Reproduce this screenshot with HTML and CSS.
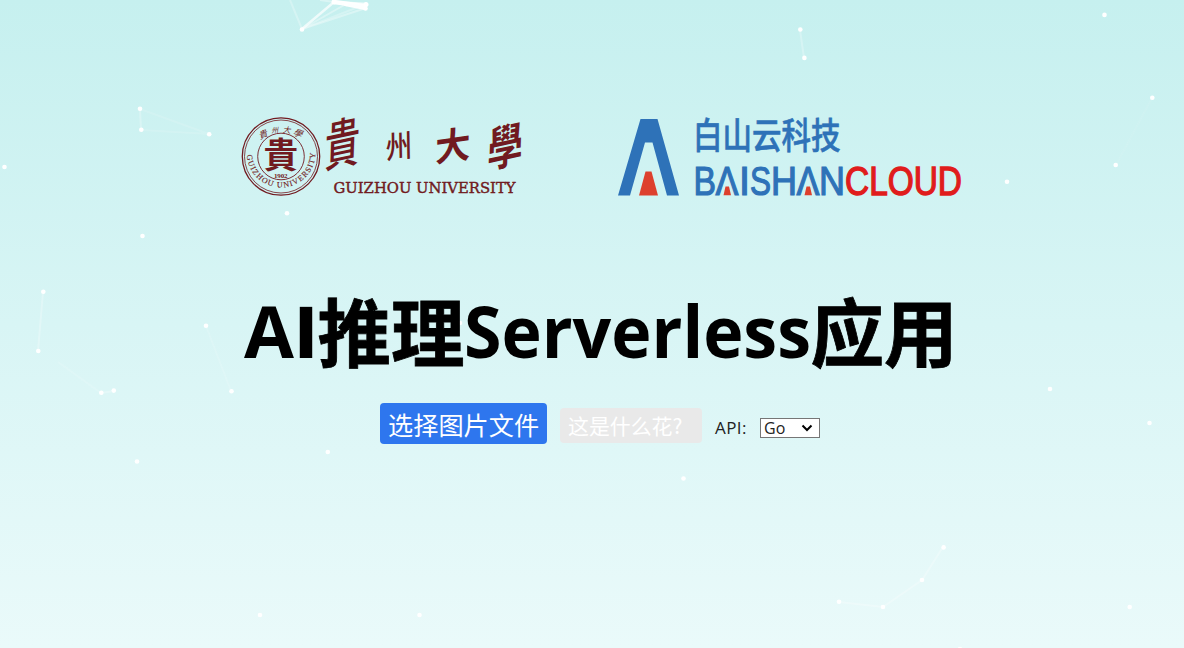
FILE: index.html
```html
<!DOCTYPE html>
<html lang="zh-CN">
<head>
<meta charset="utf-8">
<title>AI推理Serverless应用</title>
<link rel="stylesheet" href="styles.css">
</head>
<body>
<svg class="particles" width="1184" height="648" aria-hidden="true">
  <g class="links">
    <path class="thick" opacity=".95" d="M334 2L367 6.500M346 4L366 8"/>
    <path class="mid" opacity=".7" d="M302 29L334 2L367 4"/>
    <path opacity=".35" d="M302 29L346 4M302 29L366 8M334 2L320 0"/>
    <path opacity=".25" d="M302 29L290 0M302 29L366 4"/>
    <path opacity=".25" d="M140 109L141 130M800 30L804 58M43 292L38 351M101 393L114 391M839 602L883 607L922 580L943 547"/>
    <path opacity=".12" d="M140 109L209 134L141 130M206 326L231 391M58 362L101 393"/>
    <path opacity=".06" d="M1152 98L1116 165"/>
  </g>
  <g class="dots">
    <circle cx="302" cy="29.500" r="2.300"/><circle cx="334" cy="2" r="2.500"/><circle cx="346" cy="4" r="2.300"/><circle cx="366" cy="4.500" r="2.500"/><circle cx="365.500" cy="8.500" r="2.300"/>
    <circle cx="140" cy="108.700" r="2.300"/><circle cx="141.300" cy="129.800" r="2.300"/><circle cx="209.200" cy="134.200" r="2.300"/><circle cx="287" cy="213.300" r="2.300"/><circle cx="142.500" cy="236" r="2.300"/><circle cx="4.500" cy="167" r="2.300"/>
    <circle cx="43.300" cy="291.800" r="2.300"/><circle cx="38.300" cy="351" r="2.300"/><circle cx="101.300" cy="392.800" r="2.300"/><circle cx="113.800" cy="390.600" r="2.300"/><circle cx="206" cy="325.700" r="2.300"/><circle cx="231.500" cy="391.200" r="2.300"/><circle cx="137" cy="461.500" r="2.300"/><circle cx="327.800" cy="452" r="2.300"/>
    <circle cx="800.300" cy="29.500" r="2.300"/><circle cx="804.400" cy="57.900" r="2.300"/><circle cx="1104.500" cy="14.900" r="2.300"/><circle cx="1152.300" cy="97.700" r="2.300"/><circle cx="1115.700" cy="165" r="2.300"/><circle cx="1007" cy="181.800" r="2.300"/>
    <circle cx="1050" cy="389" r="2.300"/><circle cx="1149.500" cy="423" r="2.300"/><circle cx="683.500" cy="478.500" r="2.300"/><circle cx="943.600" cy="547.400" r="2.300"/><circle cx="922" cy="580" r="2.300"/><circle cx="839" cy="601.700" r="2.300"/><circle cx="883" cy="607" r="2.300"/><circle cx="1129.700" cy="607" r="2.300"/><circle cx="260" cy="615" r="2.300"/><circle cx="419.500" cy="615" r="2.300"/><circle cx="460" cy="323" r="2.300"/><circle cx="960" cy="649" r="2.300"/>
  </g>
</svg>
<main class="page">
  <header class="logos">
    <svg class="gzu" width="290" height="90" viewBox="240 110 290 90" role="img" aria-label="貴州大學 Guizhou University">
      <defs>
        <path id="ring-low" d="M246.800 155A34.300 34.300 0 0 0 315.300 155"/>
      </defs>
      <g class="seal">
        <circle cx="281" cy="156.500" r="38.700" stroke-width="1.300"/>
        <circle cx="281" cy="156.500" r="36.500" stroke-width=".8"/>
        <circle cx="281" cy="156.500" r="23.300" stroke-width=".9"/>
      </g>
      <g class="maroon">
        <text class="serif ring" font-size="8" textLength="106" lengthAdjust="spacing"><textPath href="#ring-low" startOffset="0">GUIZHOU UNIVERSITY</textPath></text>
        <g class="cjk mini" font-size="9">
          <text transform="translate(260 139.500) rotate(-24) skewX(-16)">貴</text>
          <text font-size="7" transform="translate(271.500 133) rotate(-4) skewX(-12)">州</text>
          <text font-size="8" transform="translate(282.500 132.500) rotate(5) skewX(-12)">大</text>
          <text transform="translate(292.500 134.500) rotate(20) skewX(-16)">學</text>
        </g>
        <text class="cjk heavy" font-size="33" transform="translate(263.500 167.500) scale(1.050 1.060)">貴</text>
        <text class="serif bold" x="274" y="177.500" font-size="7" textLength="13.500">1902</text>
        <g class="cjk brush">
          <text font-size="50" transform="translate(324 167.500) rotate(-12) skewX(-14) scale(.72 1.060)">貴</text>
          <text font-size="32" transform="translate(386 159) rotate(-6) skewX(-5) scale(.83 .960)">州</text>
          <text class="bolder" font-size="37" transform="translate(435 162) rotate(-8) skewX(-9) scale(.96 1)">大</text>
          <text class="bolder" font-size="43" transform="translate(487 168) rotate(-12) skewX(-14) scale(.84 1.080)">學</text>
        </g>
        <text class="serif name" x="333.500" y="192.700" font-size="14" textLength="182" lengthAdjust="spacingAndGlyphs">GUIZHOU UNIVERSITY</text>
      </g>
    </svg>
    <svg class="baishan" width="350" height="90" viewBox="615 110 350 90" role="img" aria-label="白山云科技 BAISHANCLOUD">
      <path class="blue" d="M640.500 119H657.500L679 195.500H667L652.500 142.500H645L630 195.500H618Z"/>
      <path class="red" d="M645.500 171.500H651.500L658 195.500H639Z"/>
      <text class="blue cjk medium" font-size="36" transform="translate(693 148.700) scale(.82 1)" textLength="180">白山云科技</text>
      <g class="blue latin">
        <text x="693.500" y="195" textLength="22.500" lengthAdjust="spacingAndGlyphs">B</text>
        <text x="715.500" y="195" textLength="23" lengthAdjust="spacingAndGlyphs">Λ</text>
        <text x="739" y="195" textLength="11" lengthAdjust="spacingAndGlyphs">I</text>
        <text x="750" y="195" textLength="21" lengthAdjust="spacingAndGlyphs">S</text>
        <text x="771" y="195" textLength="26" lengthAdjust="spacingAndGlyphs">H</text>
        <text x="796.500" y="195" textLength="23" lengthAdjust="spacingAndGlyphs">Λ</text>
        <text x="819" y="195" textLength="26" lengthAdjust="spacingAndGlyphs">N</text>
      </g>
      <path class="red" d="M725.500 186.500H729L731 195.300H723.500ZM806.500 186.500H810L812 195.300H804.500Z"/>
      <text class="cloud" x="845" y="195" textLength="117" lengthAdjust="spacingAndGlyphs">CLOUD</text>
    </svg>
  </header>
  <h1 class="title">
    <svg width="714" height="90" viewBox="243 290 714 90">
      <text class="t-latin" x="244" y="358" textLength="50" lengthAdjust="spacingAndGlyphs">A</text>
      <text class="t-bar" x="294" y="358" textLength="24" lengthAdjust="spacingAndGlyphs">I</text>
      <text class="t-cjk" x="317.500" y="360.500">推理</text>
      <text class="t-latin" x="464" y="358" textLength="347" lengthAdjust="spacingAndGlyphs">Serverless</text>
      <text class="t-cjk" x="810.500" y="360.500">应用</text>
    </svg>
  </h1>
  <div class="controls">
    <button class="btn choose">选择图片文件</button>
    <button class="btn ask">这是什么花?</button>
    <span class="api">API:</span>
    <div class="select"><span>Go</span>
      <svg width="12" height="8" viewBox="0 0 12 8"><path d="M1.500 1.500L6 6L10.500 1.500"/></svg>
    </div>
  </div>
</main>
</body>
</html>
```
FILE: styles.css
```css
* { box-sizing: border-box; }
body {
  margin: 0;
  height: 648px;
  overflow: hidden;
  background: linear-gradient(#c6f0ef, #d8f5f5 50%, #eafafa);
  font-family: "Open Sans", "Noto Sans CJK SC", sans-serif;
}
.particles { position: absolute; inset: 0; }
.links path { fill: none; stroke: #fff; stroke-width: 2; }
.links .thick { stroke-width: 4.500; }
.links .mid { stroke-width: 2.500; }
.dots { fill: #fff; }
.page { position: relative; }
svg { display: block; overflow: visible; }
.logos { display: flex; gap: 85px; padding: 110px 0 0 240px; }
.seal circle { fill: none; stroke: #711a20; }
.maroon { fill: #711a20; }
.serif { font-family: "Liberation Serif", serif; }
.ring { stroke: #711a20; stroke-width: .15; }
.bold { font-weight: 700; }
.name { font-family: "DejaVu Serif", serif; stroke: #711a20; stroke-width: .4; }
.cjk { font-family: "Noto Sans CJK SC", sans-serif; }
.brush, .mini { font-family: "Noto Sans CJK TC", sans-serif; }
.brush { font-weight: 500; }
.bolder { font-weight: 700; }
.heavy { font-weight: 700; }
.medium { font-weight: 500; stroke: #2e72b8; stroke-width: .6; }
.blue { fill: #2e72b8; }
.red { fill: #dd402e; }
.latin, .cloud { font-family: "Liberation Sans", sans-serif; font-size: 40px; }
.latin { stroke: #2e72b8; stroke-width: 1.200; }
.cloud { fill: #e01c1c; stroke: #e01c1c; stroke-width: 1.400; }
.title { margin: 90px 0 0 243px; font-weight: 700; }
.t-latin { font-family: "Open Sans", sans-serif; font-size: 72px; }
.t-bar { font-family: "Liberation Sans", sans-serif; font-size: 74px; }
.t-cjk { font-family: "Noto Sans CJK SC", sans-serif; font-size: 73.500px; stroke: #000; stroke-width: .8; }
.controls { display: flex; align-items: flex-start; padding: 23px 0 0 380px; }
.btn {
  border: 0;
  padding: 0 8px;
  color: #fff;
  font-family: "Noto Sans CJK SC", sans-serif;
  text-align: left;
  white-space: nowrap;
}
.choose { width: 167px; height: 41px; border-radius: 4px; background: #2e76ee; font-size: 25.200px; line-height: 43px; }
.ask { width: 142px; height: 35px; margin: 5px 0 0 13px; border-radius: 4px; background: #e9e9e9; font-size: 20.900px; line-height: 35px; }
.api { width: 45px; margin: 13px 0 0 13px; color: #222; font-size: 17px; line-height: 24px; letter-spacing: .4px; }
.select {
  display: flex;
  align-items: center;
  justify-content: space-between;
  width: 60px;
  height: 20px;
  margin-top: 15px;
  padding: 0 6px 0 3px;
  border: 1px solid #767676;
  background: #fff;
  color: #222;
  font-size: 16px;
  line-height: 18px;
}
.select path { fill: none; stroke: #000; stroke-width: 2; }
```
